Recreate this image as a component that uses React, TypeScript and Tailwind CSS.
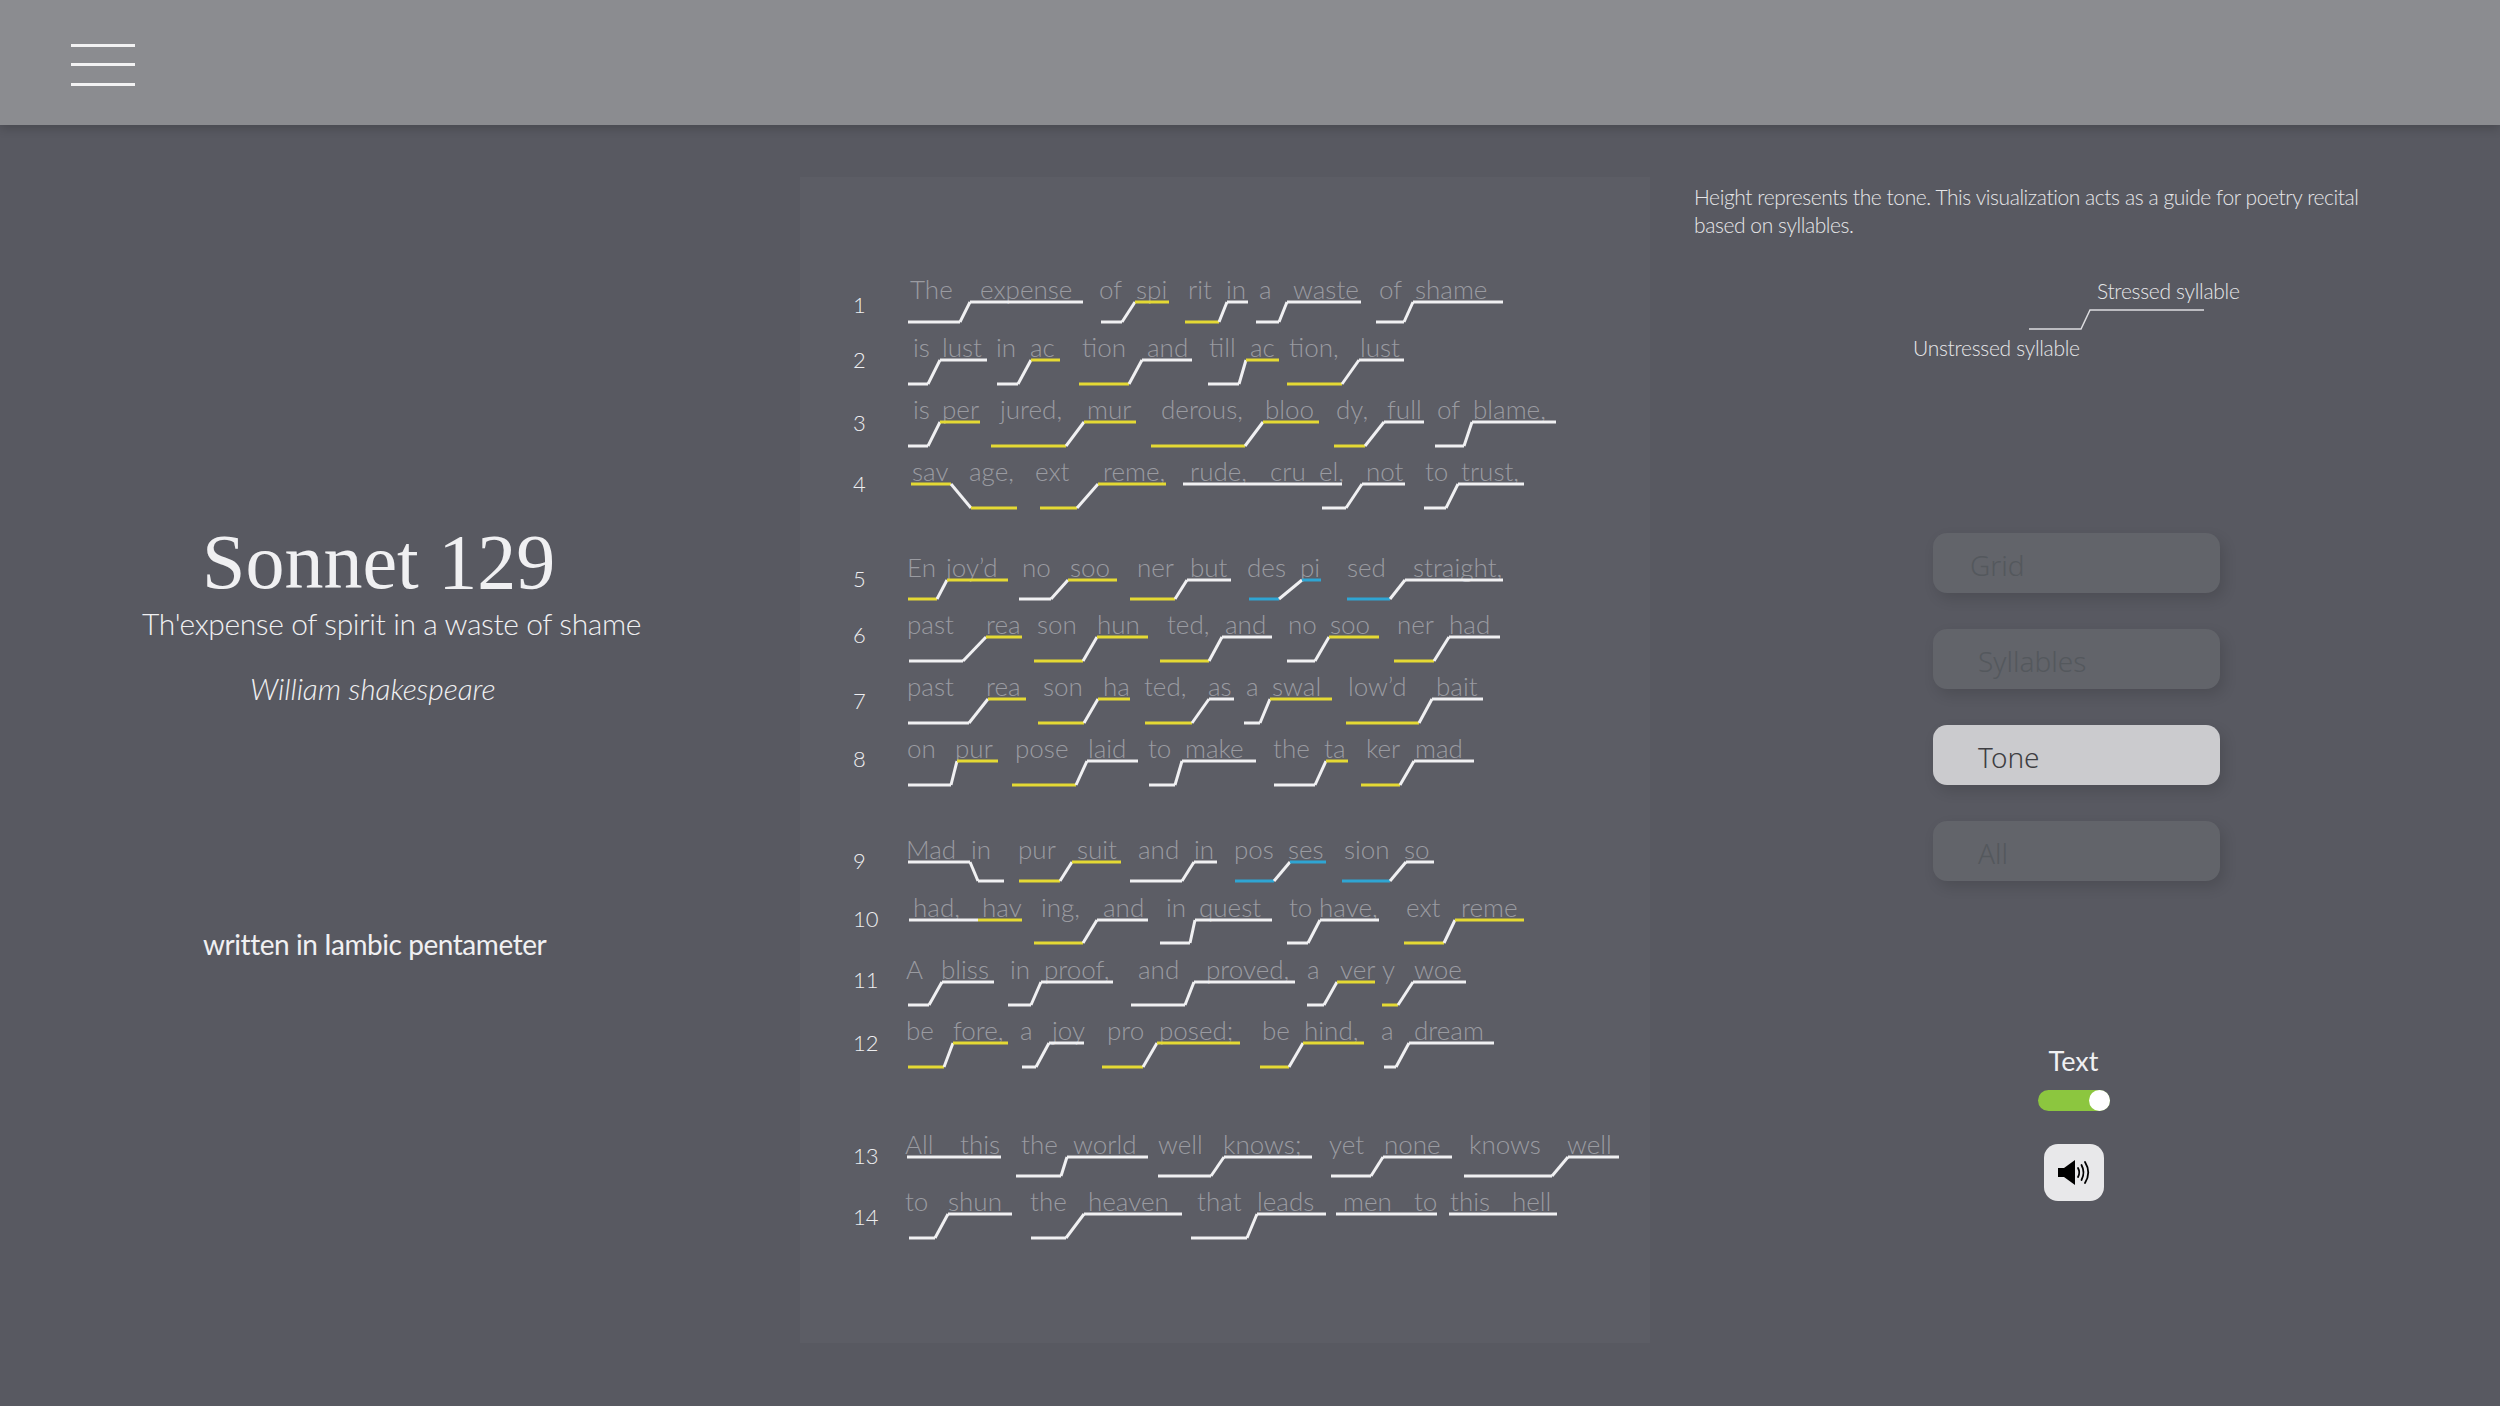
import React from 'react';

const COLORS: Record<string, string> = { W: '#f0f0f2', Y: '#e4d934', B: '#2fa5d3' };

// up step: x0..x1 low, x1..x2 rise, x2..x3 high, then low colour + high colour
// "d" = falling step, "f" = flat line along the high level
type Tone = [number, number, number, number, string] | [number, number, string, 'f'] | [number, number, number, number, string, 'd'];
type Syllable = [string, number];
type Verse = { n: number; high: number; drop: number; nudge: number; words: Syllable[]; tones: Tone[] };

const VERSES: Verse[] = [
  { n: 1, high: 302, drop: 20, nudge: 3,
    words: [['The', 92], ['expense', 162], ['of', 281], ['spi', 318], ['rit', 370], ['in', 408], ['a', 441], ['waste', 475], ['of', 561], ['shame', 597]],
    tones: [[88, 140, 150, 263, 'WW'], [281, 302, 315, 349, 'WY'], [365, 399, 407, 428, 'YW'], [436, 459, 467, 541, 'WW'], [556, 584, 593, 683, 'WW']] },
  { n: 2, high: 360, drop: 24, nudge: 0,
    words: [['is', 95], ['lust', 124], ['in', 178], ['ac', 212], ['tion', 264], ['and', 329], ['till', 391], ['ac', 432], ['tion,', 471], ['lust', 542]],
    tones: [[88, 108, 120, 167, 'WW'], [177, 198, 211, 240, 'WY'], [259, 309, 322, 372, 'YW'], [388, 419, 426, 459, 'WY'], [467, 522, 539, 584, 'YW']] },
  { n: 3, high: 422, drop: 24, nudge: 1,
    words: [['is', 95], ['per', 124], ['jured,', 182], ['mur', 269], ['derous,', 343], ['bloo', 447], ['dy,', 518], ['full', 569], ['of', 619], ['blame,', 655]],
    tones: [[88, 108, 120, 160, 'WY'], [171, 246, 264, 316, 'YY'], [331, 425, 443, 499, 'YY'], [514, 545, 564, 604, 'YW'], [615, 644, 652, 736, 'WW']] },
  { n: 4, high: 484, drop: 24, nudge: 0,
    words: [['sav', 94], ['age,', 151], ['ext', 217], ['reme,', 285], ['rude,', 372], ['cru', 452], ['el,', 501], ['not', 548], ['to', 607], ['trust,', 643]],
    tones: [[91, 131, 151, 197, 'YY', 'd'], [220, 257, 278, 346, 'YY'], [363, 522, 'W', 'f'], [502, 526, 542, 585, 'WW'], [604, 626, 638, 704, 'WW']] },
  { n: 5, high: 580, drop: 19, nudge: -1,
    words: [['En', 89], ['joy’d', 128], ['no', 204], ['soo', 252], ['ner', 319], ['but', 372], ['des', 429], ['pi', 482], ['sed', 529], ['straight,', 595]],
    tones: [[88, 117, 127, 188, 'YY'], [199, 231, 248, 297, 'WY'], [310, 355, 367, 411, 'YW'], [429, 459, 482, 501, 'BB'], [527, 570, 585, 683, 'BW']] },
  { n: 6, high: 637, drop: 24, nudge: -2,
    words: [['past', 89], ['rea', 168], ['son', 219], ['hun', 279], ['ted,', 349], ['and', 407], ['no', 470], ['soo', 512], ['ner', 579], ['had', 631]],
    tones: [[89, 143, 166, 202, 'WY'], [214, 263, 277, 328, 'YY'], [340, 389, 402, 452, 'YW'], [467, 495, 509, 559, 'WY'], [574, 614, 629, 680, 'YW']] },
  { n: 7, high: 699, drop: 24, nudge: 2,
    words: [['past', 89], ['rea', 168], ['son', 225], ['ha', 285], ['ted,', 326], ['as', 390], ['a', 428], ['swal', 454], ['low’d', 530], ['bait', 618]],
    tones: [[88, 149, 168, 206, 'WY'], [218, 264, 278, 310, 'YY'], [325, 372, 389, 414, 'YW'], [424, 440, 450, 512, 'WY'], [526, 599, 612, 663, 'YW']] },
  { n: 8, high: 761, drop: 24, nudge: -2,
    words: [['on', 89], ['pur', 137], ['pose', 197], ['laid', 270], ['to', 330], ['make', 367], ['the', 455], ['ta', 506], ['ker', 548], ['mad', 597]],
    tones: [[88, 131, 137, 178, 'WY'], [192, 256, 267, 318, 'YW'], [329, 355, 362, 436, 'WW'], [454, 495, 506, 528, 'WY'], [541, 580, 594, 654, 'YW']] },
  { n: 9, high: 862, drop: 19, nudge: -1,
    words: [['Mad', 88], ['in', 153], ['pur', 200], ['suit', 259], ['and', 320], ['in', 376], ['pos', 416], ['ses', 470], ['sion', 526], ['so', 586]],
    tones: [[88, 150, 158, 184, 'WW', 'd'], [199, 240, 252, 301, 'YY'], [310, 362, 374, 397, 'WW'], [415, 454, 470, 506, 'BB'], [522, 570, 586, 614, 'BW']] },
  { n: 10, high: 920, drop: 23, nudge: -1,
    words: [['had,', 95], ['hav', 164], ['ing,', 223], ['and', 285], ['in', 348], ['quest', 381], ['to', 471], ['have,', 501], ['ext', 588], ['reme', 643]],
    tones: [[89, 158, 'W', 'f'], [158, 202, 'Y', 'f'], [214, 263, 277, 328, 'YW'], [340, 370, 375, 452, 'WW'], [467, 488, 500, 559, 'WW'], [584, 624, 635, 704, 'YY']] },
  { n: 11, high: 982, drop: 23, nudge: -2,
    words: [['A', 88], ['bliss', 123], ['in', 192], ['proof,', 226], ['and', 320], ['proved,', 388], ['a', 489], ['ver', 522], ['y', 564], ['woe', 596]],
    tones: [[88, 109, 122, 174, 'WW'], [188, 211, 221, 293, 'WW'], [311, 365, 374, 475, 'WW'], [487, 504, 517, 555, 'WY'], [562, 578, 593, 646, 'YW']] },
  { n: 12, high: 1043, drop: 24, nudge: 0,
    words: [['be', 88], ['fore,', 135], ['a', 202], ['joy', 234], ['pro', 289], ['posed;', 341], ['be', 444], ['hind,', 486], ['a', 563], ['dream', 596]],
    tones: [[88, 124, 133, 188, 'YY'], [202, 216, 229, 264, 'WW'], [282, 323, 337, 420, 'YY'], [440, 469, 483, 544, 'YY'], [564, 576, 589, 674, 'WW']] },
  { n: 13, high: 1157, drop: 19, nudge: -1,
    words: [['All', 87], ['this', 142], ['the', 203], ['world', 255], ['well', 340], ['knows;', 405], ['yet', 511], ['none', 566], ['knows', 651], ['well', 749]],
    tones: [[87, 181, 'W', 'f'], [196, 241, 247, 328, 'WW'], [338, 391, 404, 492, 'WW'], [511, 551, 563, 632, 'WW'], [644, 732, 748, 799, 'WW']] },
  { n: 14, high: 1214, drop: 24, nudge: 3,
    words: [['to', 87], ['shun', 130], ['the', 212], ['heaven', 270], ['that', 379], ['leads', 439], ['men', 525], ['to', 596], ['this', 632], ['hell', 694]],
    tones: [[89, 115, 128, 192, 'WW'], [211, 246, 264, 362, 'WW'], [371, 427, 437, 506, 'WW'], [516, 617, 'W', 'f'], [629, 737, 'W', 'f']] },
];

const TOP = 2; // y of the high level inside a verse's svg

function ToneShape({ tone, drop }: { tone: Tone; drop: number }) {
  const low = TOP + drop;
  if (tone[3] === 'f') {
    return <line x1={tone[0]} x2={tone[1]} y1={TOP} y2={TOP} stroke={COLORS[tone[2] as string]} />;
  }
  const [a, b, c, d, col] = tone as [number, number, number, number, string];
  if (tone[5] === 'd') {
    return (
      <>
        <line x1={a} x2={b} y1={TOP} y2={TOP} stroke={COLORS[col[0]]} />
        <line x1={b} x2={c} y1={TOP} y2={low} stroke={COLORS.W} />
        <line x1={c} x2={d} y1={low} y2={low} stroke={COLORS[col[1]]} />
      </>
    );
  }
  return (
    <>
      <line x1={a} x2={b} y1={low} y2={low} stroke={COLORS[col[0]]} />
      <line x1={b} x2={c} y1={low} y2={TOP} stroke={COLORS.W} />
      <line x1={c} x2={d} y1={TOP} y2={TOP} stroke={COLORS[col[1]]} />
    </>
  );
}

function VerseRow({ verse, next }: { verse: Verse; next?: Verse }) {
  const words = verse.words;
  return (
    <div className="flex" style={{ height: next ? next.high - verse.high : 60 }}>
      <div className="w-[80px] shrink-0 pl-[33px] text-[22px] leading-[24px] font-light text-[#eeeef0]" style={{ paddingTop: 18 + verse.nudge }}>
        {verse.n}
      </div>
      <div className="flex flex-col">
        <div className="flex h-[28px] shrink-0 text-[26px] leading-[34px] font-light text-[#9a9ba1] whitespace-nowrap" style={{ marginLeft: words[0][1] - 82 }}>
          {words.map(([text, x], i) => (
            <span key={i} style={{ width: i < words.length - 1 ? words[i + 1][1] - x : undefined }}>
              {text}
            </span>
          ))}
        </div>
        <svg className="shrink-0" width="730" height="30" viewBox="80 0 730 30" fill="none" strokeWidth="3">
          {verse.tones.map((t, i) => (
            <ToneShape key={i} tone={t} drop={verse.drop} />
          ))}
        </svg>
      </div>
    </div>
  );
}

function OptionButton({ label, active, indent }: { label: string; active?: boolean; indent?: string }) {
  return (
    <div
      className={`flex h-[60px] w-[287px] items-center rounded-[14px] pt-[3px] text-[28px] [font-family:'Noto_Sans',sans-serif] shadow-[4px_6px_14px_rgba(0,0,0,0.13)] ${
        active ? 'bg-[#cbcbce] text-[#3e3e42]' : 'bg-[#62646a] text-[#54585d]'
      } ${indent ?? 'pl-[45px]'}`}
    >
      {label}
    </div>
  );
}

export default function App() {
  return (
    <div className="flex h-[1406px] w-[2500px] flex-col overflow-hidden bg-[#585961] [font-family:Lato,sans-serif]">
      <header className="relative z-10 h-[125px] shrink-0 bg-[#8b8c90] pl-[71px] pt-[44px] shadow-[0_3px_10px_rgba(0,0,0,0.2)]">
        <div className="h-[3px] w-[64px] bg-[#f2f2f3]" />
        <div className="mt-[16px] h-[3px] w-[64px] bg-[#f2f2f3]" />
        <div className="mt-[17px] h-[3px] w-[64px] bg-[#f2f2f3]" />
      </header>

      <main className="flex flex-1">
        <section className="flex w-[800px] shrink-0 flex-col whitespace-nowrap pt-[397px] text-[#f0f0f2]">
          <h1 className="ml-[202px] text-[78px] leading-[80px] [font-family:'Liberation_Serif',serif]">Sonnet 129</h1>
          <p className="ml-[142px] mt-[3px] text-[30px] leading-[36px] font-light tracking-[-0.4px]">Th'expense of spirit in a waste of shame</p>
          <p className="ml-[250px] mt-[29px] text-[30px] leading-[36px] font-light italic tracking-[-0.1px]">William shakespeare</p>
          <p className="ml-[203px] mt-[220px] text-[28px] leading-[36px] tracking-[-0.45px]">written in Iambic pentameter</p>
        </section>

        <section className="mt-[52px] h-[1166px] w-[850px] shrink-0 bg-[#5c5d65] pl-[20px] pt-[95px]">
          {VERSES.map((v, i) => (
            <VerseRow key={v.n} verse={v} next={VERSES[i + 1]} />
          ))}
        </section>

        <aside className="flex flex-col pl-[44px] pt-[58px] text-[21px] leading-[28px] font-light text-[#e6e6e8]">
          <p className="w-[680px] tracking-[-0.42px]">
            Height represents the tone. This visualization acts as a guide for poetry recital based on syllables.
          </p>
          <span className="ml-[403px] mt-[38px] tracking-[-0.3px]">Stressed syllable</span>
          <svg className="ml-[335px] mt-[2px] shrink-0" width="180" height="24" viewBox="0 0 180 24" fill="none" stroke="#dcdcdf" strokeWidth="1.5">
            <path d="M0 22 H52 L61 3 H175" />
          </svg>
          <span className="ml-[219px] mt-[3px] tracking-[-0.3px]">Unstressed syllable</span>

          <div className="ml-[239px] mt-[171px] flex flex-col gap-9">
            <OptionButton label="Grid" indent="pl-[37px]" />
            <OptionButton label="Syllables" />
            <OptionButton label="Tone" active />
            <OptionButton label="All" />
          </div>

          <div className="ml-[239px] flex w-[281px] flex-col items-center">
            <span className="mt-[162px] text-[27px] leading-[36px] font-normal text-[#f0f0f2]">Text</span>
            <div className="mt-[11px] flex h-[21px] w-[72px] justify-end rounded-full bg-[#8cc63f]">
              <div className="h-[21px] w-[21px] rounded-full bg-white" />
            </div>
            <button className="mt-[33px] flex h-[57px] w-[60px] items-center justify-center rounded-[14px] bg-[#e8e8ea]">
              <svg width="32" height="25" viewBox="0 0 32 25" fill="none">
                <path d="M0 8 H6 L17 0 V25 L6 17 H0 Z" fill="#000" />
                <g stroke="#000" strokeWidth="1.8" strokeLinecap="round">
                  <path d="M20 8 Q22.5 12.5 20 17" />
                  <path d="M23.5 5 Q27.5 12.5 23.5 20" />
                  <path d="M27 2 Q33.5 12.5 27 23" />
                </g>
              </svg>
            </button>
          </div>
        </aside>
      </main>
    </div>
  );
}
